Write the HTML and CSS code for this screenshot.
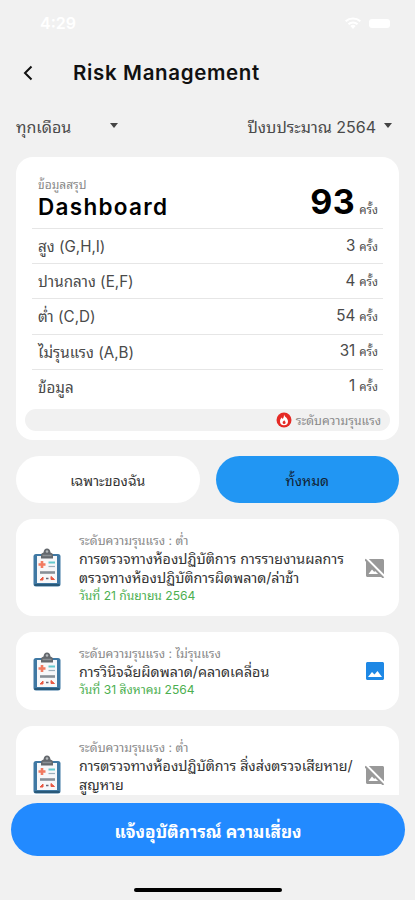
FILE: index.html
```
<!DOCTYPE html>
<html lang="th">
  <head>
    <meta charset="UTF-8" />
    <meta name="viewport" content="width=device-width, initial-scale=1.0" />
    <title>Risk Management</title>
    <link rel="stylesheet" href="styles.css">
  </head>
  <body>
    <!-- Shared icons -->
    <svg class="sprite">
      <symbol id="clipboard" viewBox="0 0 28 39">
        <rect x="0.5" y="6" width="27" height="32.5" rx="2.5" fill="#3f78a3" />
        <path d="M1.500 37h25" stroke="#285878" stroke-width="2" />
        <rect x="4" y="8" width="20" height="27" fill="#f7f7f9" />
        <path d="M8 10.500V7Q8 5 10.500 4.500Q11 0.500 14 0.500T17.500 4.500Q20 5 20 7V10.500Z" fill="#64686d" />
        <path d="M9.500 7.500h9" stroke="#8b9095" stroke-width="1.500" />
        <circle cx="14" cy="3.500" r="1.300" fill="#b5b9bc" />
        <path d="M9 13v7M5.500 16.500h7" stroke="#f27a60" stroke-width="2.600" />
        <path d="M15.500 14.500h6.500" stroke="#63c9cd" stroke-width="2" />
        <path d="M15.500 18.500h6.500" stroke="#9caebb" stroke-width="1.200" />
        <path d="M7 24.500h15" stroke="#888f97" stroke-width="2.600" />
        <path d="M7 32l3-3v3zM18 28.500l3.500 3h-3.500z" fill="#e95843" stroke="#e95843" />
        <path d="M13 30.500h2.500" stroke="#667" stroke-width="1.500" />
      </symbol>
      <symbol id="photo" viewBox="3 3 18 18">
        <path d="M21 19.500v-15c0-.8-.7-1.500-1.500-1.500h-15C3.700 3 3 3.700 3 4.500v15c0 .8.700 1.500 1.500 1.500h15c.8 0 1.500-.7 1.500-1.500zM5 18l4-5 2.500 2.500L14.500 12l4.500 6z" />
      </symbol>
      <symbol id="no-photo" viewBox="2 2 20 20">
        <path d="M21 4.500c0-.8-.7-1.500-1.500-1.500H5.830L21 18.170V4.500zM2.810 2.810L1.390 4.220 3 5.830V19.500c0 .8.700 1.500 1.500 1.500h13.670l1.610 1.610 1.410-1.410L2.810 2.810zM5.500 18l3.500-4.500 2.250 2.500.82-1.100 3.100 3.100H5.500z" />
      </symbol>
    </svg>

    <div class="status-bar">
      <span class="time">4:29</span>
      <svg class="wifi" viewBox="0 0 16 12"><path d="M8 12L5.300 9a4 4 0 0 1 5.400 0zM0 3.500a12 12 0 0 1 16 0l-1.400 1.600a10 10 0 0 0-13.200 0zM2.700 6.500a8 8 0 0 1 10.600 0l-1.500 1.600a6 6 0 0 0-7.600 0z" /></svg>
      <span class="battery"></span>
    </div>

    <header>
      <svg class="back" viewBox="0 0 10 16"><path d="M8.500 1.500L2 8l6.500 6.500" /></svg>
      <h1>Risk Management</h1>
    </header>

    <div class="filters">
      <div class="select month"><span>ทุกเดือน</span><i class="caret"></i></div>
      <div class="select"><span>ปีงบประมาณ 2564</span><i class="caret"></i></div>
    </div>

    <section class="summary">
      <div class="summary-head">
        <div>
          <p class="caption">ข้อมูลสรุป</p>
          <h2>Dashboard</h2>
        </div>
        <div class="total"><b>93</b><small>ครั้ง</small></div>
      </div>
      <div class="row"><span>สูง (G,H,I)</span><span>3<small>ครั้ง</small></span></div>
      <div class="row"><span>ปานกลาง (E,F)</span><span>4<small>ครั้ง</small></span></div>
      <div class="row"><span>ต่ำ (C,D)</span><span>54<small>ครั้ง</small></span></div>
      <div class="row"><span>ไม่รุนแรง (A,B)</span><span>31<small>ครั้ง</small></span></div>
      <div class="row"><span>ข้อมูล</span><span>1<small>ครั้ง</small></span></div>
      <div class="level">
        <svg class="fire" viewBox="0 0 16 16">
          <circle cx="8" cy="8" r="7.500" fill="#e52a25" />
          <path d="M8 2.500C8.500 5 12 6 12 9.300A4 4 0 0 1 4 9.300C4 7.500 5 6.500 5.800 5.500L6.500 7C7.500 6 8 4.500 8 2.500z" fill="#fff" />
          <path d="M8.200 8c.2 1 1.400 1.500 1.400 2.600a1.500 1.500 0 0 1-3 0C6.600 9.500 8 9 8.200 8z" fill="#e52a25" />
        </svg>
        <span>ระดับความรุนแรง</span>
      </div>
    </section>

    <div class="tabs">
      <button class="tab">เฉพาะของฉัน</button>
      <button class="tab active">ทั้งหมด</button>
    </div>

    <main class="list">
      <article class="item tall">
        <svg class="clip"><use href="#clipboard" /></svg>
        <div class="info">
          <p class="severity">ระดับความรุนแรง : ต่ำ</p>
          <p class="name">การตรวจทางห้องปฏิบัติการ การรายงานผลการ<br />ตรวจทางห้องปฏิบัติการผิดพลาด/ล่าช้า</p>
          <p class="date">วันที่ 21 กันยายน 2564</p>
        </div>
        <svg class="pic off"><use href="#no-photo" /></svg>
      </article>
      <article class="item">
        <svg class="clip"><use href="#clipboard" /></svg>
        <div class="info">
          <p class="severity">ระดับความรุนแรง : ไม่รุนแรง</p>
          <p class="name">การวินิจฉัยผิดพลาด/คลาดเคลื่อน</p>
          <p class="date">วันที่ 31 สิงหาคม 2564</p>
        </div>
        <svg class="pic"><use href="#photo" /></svg>
      </article>
      <article class="item tall">
        <svg class="clip"><use href="#clipboard" /></svg>
        <div class="info">
          <p class="severity">ระดับความรุนแรง : ต่ำ</p>
          <p class="name">การตรวจทางห้องปฏิบัติการ สิ่งส่งตรวจเสียหาย/<br />สูญหาย</p>
        </div>
        <svg class="pic off"><use href="#no-photo" /></svg>
      </article>
    </main>

    <button class="report">แจ้งอุบัติการณ์ ความเสี่ยง</button>
    <div class="home-bar"></div>
  </body>
</html>
```
FILE: styles.css
```
* {
  box-sizing: border-box;
}

body {
  margin: 0;
  height: 900px;
  overflow: hidden;
  display: flex;
  flex-direction: column;
  background: #f1f1f1;
  color: #4a4a4a;
  font-family: Inter, "Noto Sans Thai Looped", "Noto Sans Thai", "Noto Sans", sans-serif;
}

h1,
h2,
p {
  margin: 0;
}

button {
  border: 0;
  padding: 0;
  font-family: inherit;
}

svg {
  flex: none;
}

.sprite {
  position: absolute;
  width: 0;
  height: 0;
}

/* Status bar */
.status-bar {
  display: flex;
  align-items: center;
  height: 46px;
  padding: 0 25px 0 40px;
  color: #fff;
}

.time {
  flex: 1;
  font-size: 16px;
  font-weight: 600;
}

.wifi {
  width: 16px;
  height: 12px;
  margin-right: 8px;
  fill: #fff;
}

.battery {
  width: 21px;
  height: 9px;
  border-radius: 3px;
  background: #fff;
}

/* Header */
header {
  display: flex;
  align-items: center;
  height: 54px;
  padding-left: 23px;
}

.back {
  width: 10px;
  height: 16px;
  margin-right: 40px;
  fill: none;
  stroke: #111;
  stroke-width: 2;
}

h1 {
  color: #111;
  font-size: 20.5px;
  font-weight: 600;
  line-height: 26px;
  letter-spacing: 0.65px;
}

.filters {
  display: flex;
  justify-content: space-between;
  height: 57px;
  padding: 0 23px 6px 16px;
  font-size: 16px;
}

.select {
  display: flex;
  align-items: center;
  gap: 8px;
}

.month {
  width: 102px;
  justify-content: space-between;
}

.caret {
  border: 4.5px solid transparent;
  border-top: 5px solid #444;
  border-bottom: 0;
}

/* Summary card */
.summary {
  height: 283px;
  padding: 0 16px;
  border-radius: 17px;
  margin: 0 16px 16px;
  background: #fff;
}

.summary-head {
  display: flex;
  justify-content: space-between;
  height: 71px;
  padding: 19px 5px 0 6px;
}

.caption {
  color: #888;
  font-size: 12px;
  line-height: 17px;
}

h2 {
  color: #000;
  font-size: 22.5px;
  font-weight: 600;
  line-height: 27px;
  letter-spacing: 1.3px;
}

.total {
  display: flex;
  align-items: baseline;
  color: #000;
  line-height: 51px;
}

.total b {
  font-size: 34px;
  font-weight: 700;
  letter-spacing: 0.5px;
}

small {
  margin-left: 4px;
  color: #4a4a4a;
  font-size: 11.5px;
}

.row {
  display: flex;
  justify-content: space-between;
  align-items: center;
  height: 35.2px;
  border-top: 1.5px solid #e6e6e6;
  padding: 0 5px 2px 6px;
  font-size: 15.2px;
}

.level {
  display: flex;
  align-items: center;
  justify-content: flex-end;
  gap: 4px;
  height: 22px;
  padding-right: 9px;
  margin: 5px -7px 0;
  border-radius: 11px;
  background: #f1f1f1;
  color: #888;
  font-size: 12.2px;
}

.fire {
  width: 16px;
  height: 16px;
}

/* Tabs */
.tabs {
  display: flex;
  gap: 16px;
  margin: 0 16px 16px;
}

.tab {
  flex: 1;
  height: 47px;
  border-radius: 24px;
  background: #fff;
  color: #333;
  font-size: 14px;
}

.active {
  background: #2196f3;
  color: #123;
}

/* Incident list */
.list {
  height: 276px;
  padding: 0 16px;
  overflow: hidden;
}

.item {
  display: flex;
  align-items: center;
  height: 78px;
  padding: 0 15px 0 17px;
  margin-bottom: 16px;
  border-radius: 17px;
  background: #fff;
}

.tall {
  height: 97px;
}

.clip {
  width: 28px;
  height: 39px;
  margin-right: 18px;
}

.info {
  flex: 1;
  white-space: nowrap;
}

.tall .info {
  min-height: 72px;
}

.severity {
  color: #888;
  font-size: 12.3px;
  line-height: 17px;
}

.name {
  color: #333;
  font-size: 14.25px;
  line-height: 19px;
}

.date {
  color: #4caf50;
  font-size: 12.1px;
  line-height: 17px;
}

.pic {
  width: 18px;
  height: 18px;
  fill: #1e88e5;
}

.off {
  width: 20px;
  height: 20px;
  margin-right: -1px;
  fill: #999;
}

.report {
  flex: none;
  height: 53px;
  margin: 8px 10px 0 11px;
  border-radius: 27px;
  background: #228aff;
  color: #fff;
  font-size: 17.2px;
  font-weight: 700;
}

.home-bar {
  width: 148px;
  height: 4px;
  margin: 32px auto 0;
  border-radius: 2px;
  background: #000;
}
```
